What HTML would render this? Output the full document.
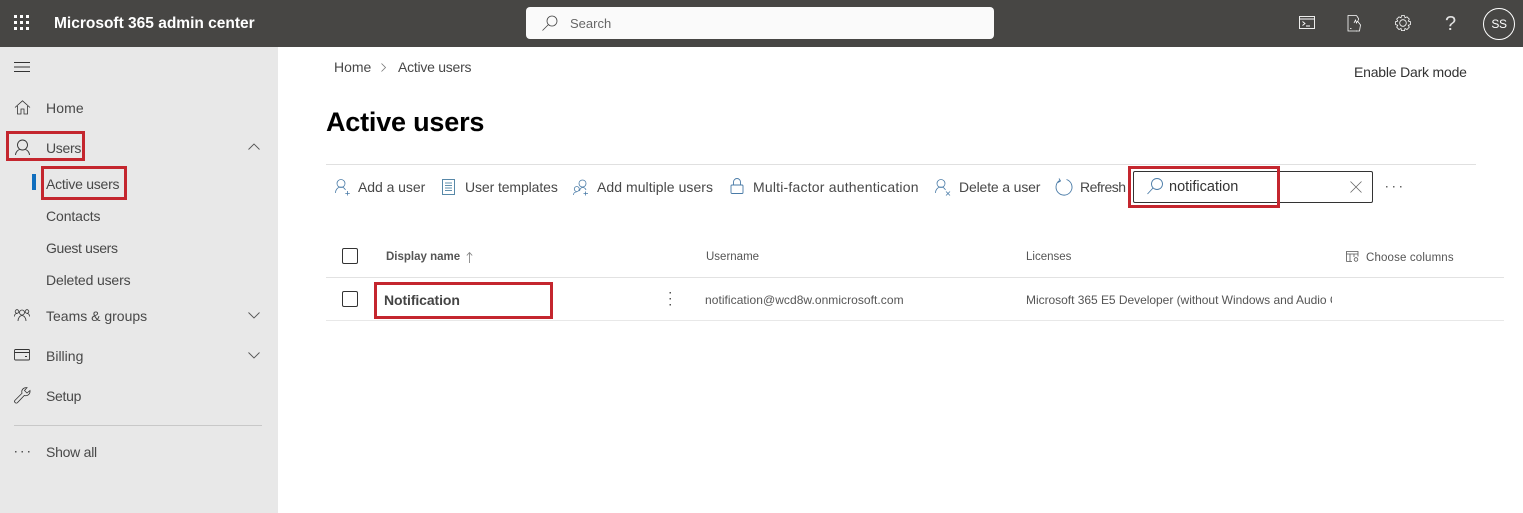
<!DOCTYPE html>
<html lang="en"><head><meta charset="utf-8"><title>Active users - Microsoft 365 admin center</title>
<style>
html,body{margin:0;padding:0;width:1523px;height:513px;overflow:hidden;background:#fff}
body{position:relative;font-family:"Liberation Sans",sans-serif;font-size:14px;color:#484848}
.t{position:absolute;white-space:nowrap;line-height:18px}
.b{position:absolute;box-sizing:border-box}
.r{position:absolute;box-sizing:border-box;border:3px solid #c4262e}
svg{position:absolute;overflow:visible;fill:none}
.s{font-size:14px}
.x{font-size:11.5px;color:#555}
</style></head><body>
<div class="b" style="left:0;top:0;width:1523px;height:47px;background:#474644"></div>
<div class="b" style="left:0;top:47px;width:278px;height:466px;background:#e8e8e8"></div>

<svg style="left:14px;top:15px" width="16" height="16"><g fill="#fff"><rect width="3" height="3" y="0" x="0"/><rect width="3" height="3" y="0" x="6"/><rect width="3" height="3" y="0" x="12"/><rect width="3" height="3" y="6" x="0"/><rect width="3" height="3" y="6" x="6"/><rect width="3" height="3" y="6" x="12"/><rect width="3" height="3" y="12" x="0"/><rect width="3" height="3" y="12" x="6"/><rect width="3" height="3" y="12" x="12"/></g></svg>
<div class="t" style="left:54px;top:15px;font-size:15.5px;font-weight:bold;color:#fff">Microsoft 365 admin center</div>

<div class="b" style="left:526px;top:7px;width:468px;height:32px;background:#fafafa;border-radius:4px"></div>
<svg style="left:542px;top:15px" width="16" height="16" stroke="#444" stroke-width=".8"><circle cx="10" cy="6" r="5"/><path d="M6.500 9.500L.5 15.500"/></svg>
<div class="t" style="left:570px;top:15px;color:#666;font-size:13px">Search</div>

<svg style="left:1299px;top:16px" width="16" height="14" stroke="#fff" stroke-width=".9"><rect x=".5" y=".5" width="15" height="12"/><path d="M.5 3h15M3.500 5.500l2.500 2-2.500 2M7 10h4"/></svg>
<svg style="left:1347px;top:15px" width="16" height="17" stroke="#fff" stroke-width=".8"><path d="M9.500 .5H1v15.500h9M9.500 .5l2 3v2"/><path d="M7 8l1.500-3 1 3 1-2 3 4-1 6h-3.500"/><path d="M3 13.500h1.500"/></svg>
<svg style="left:1395px;top:15px" width="16" height="16" stroke="#fff" stroke-width=".8"><circle cx="8" cy="8" r="3.300"/><path d="M6.500.6h3l.5 2.200 2-1 2.300 2.300-1 2 2.100.5v3l-2.100.6 1 2-2.300 2.300-2-1-.5 2.100h-3l-.5-2.100-2 1-2.300-2.300 1-2-2.100-.6v-3l2.100-.5-1-2L4 1.800l2 1z"/></svg>
<div class="t" style="left:1445px;top:12px;font-size:20px;line-height:24px;color:#e2e2e2">?</div>
<div class="b" style="left:1483px;top:8px;width:32px;height:32px;border:1px solid #fff;border-radius:50%;background:#474644;color:#fff;font-size:12px;letter-spacing:-.4px;line-height:30px;text-align:center">SS</div>

<svg style="left:14px;top:62px" width="16" height="11" stroke="#333" stroke-width=".9"><path d="M0 .5h16M0 5h16M0 9.500h16"/></svg>

<svg style="left:15px;top:100px" width="16" height="15" stroke="#333" stroke-width=".8"><path d="M0 7.500L7.500 .8 15 7.500M2.500 6v8h3.500v-5h3v5h3.500V6"/></svg>
<div class="t" style="left:46px;top:99px;letter-spacing:.1px">Home</div>
<svg style="left:15px;top:139px" width="15" height="17" stroke="#333" stroke-width=".9"><circle cx="7.500" cy="6" r="5"/><path d="M.5 16c0-3 2.500-5 4-5.500M14.500 16c0-3-2.500-5-4-5.500"/></svg>
<div class="t" style="left:46px;top:139px;letter-spacing:-.3px">Users</div>
<svg style="left:248px;top:143px" width="12" height="7" stroke="#555" stroke-width=".9"><path d="M.5 6.500L6 1l5.500 5.500"/></svg>
<div class="b" style="left:32px;top:174px;width:4px;height:16px;background:#106ebe"></div>
<div class="t" style="left:46px;top:175px;letter-spacing:-.25px">Active users</div>
<div class="t" style="left:46px;top:207px;letter-spacing:-.1px">Contacts</div>
<div class="t" style="left:46px;top:239px;letter-spacing:-.35px">Guest users</div>
<div class="t" style="left:46px;top:271px;letter-spacing:-.15px">Deleted users</div>

<svg style="left:14px;top:309px" width="16" height="13" stroke="#333" stroke-width=".8"><circle cx="3" cy="2.500" r="1.800"/><circle cx="13" cy="2.500" r="1.800"/><circle cx="8" cy="3.500" r="2.500"/><path d="M.5 7.500c0-2 1-3 2.500-3M15.500 7.500c0-2-1-3-2.500-3M4 12c0-3 2-5.500 4-5.500s4 2.500 4 5.500"/></svg>
<div class="t" style="left:46px;top:307px">Teams &amp; groups</div>
<svg style="left:248px;top:312px" width="12" height="7" stroke="#555" stroke-width=".9"><path d="M.5.5L6 6l5.500-5.500"/></svg>
<svg style="left:14px;top:349px" width="16" height="12" stroke="#333" stroke-width=".9"><rect x=".5" y=".5" width="15" height="10.500" rx="1"/><path d="M.5 3.500h15M11 7.500h2"/></svg>
<div class="t" style="left:46px;top:347px">Billing</div>
<svg style="left:248px;top:352px" width="12" height="7" stroke="#555" stroke-width=".9"><path d="M.5.5L6 6l5.500-5.500"/></svg>
<svg style="left:14px;top:387px" width="17" height="17" stroke="#333" stroke-width=".8"><path d="M.8 13.500l7.200-7.200C7 3 9.500.2 13 .7l-2.500 2.800 2.500 2.500 3-2.500c.4 3.500-2.500 6-5.700 5L3.300 15.800c-1.500 1-3.500-.8-2.500-2.300z"/></svg>
<div class="t" style="left:46px;top:387px;letter-spacing:-.3px">Setup</div>
<div class="b" style="left:14px;top:425px;width:248px;height:1px;background:#c8c8c8"></div>
<svg style="left:15px;top:451px" width="15" height="3"><g fill="#555"><rect width="1.500" height="1.500"/><rect x="6.500" width="1.500" height="1.500"/><rect x="13" width="1.500" height="1.500"/></g></svg>
<div class="t" style="left:46px;top:443px;letter-spacing:-.25px">Show all</div>

<div class="r" style="left:6px;top:131px;width:79px;height:30px"></div>
<div class="r" style="left:41px;top:166px;width:86px;height:34px"></div>

<div class="t s" style="left:334px;top:58px">Home</div>
<svg style="left:381px;top:63px" width="5" height="9" stroke="#777" stroke-width=".8"><path d="M.5.5l4 4-4 4"/></svg>
<div class="t s" style="left:398px;top:58px;letter-spacing:-.25px">Active users</div>
<div class="t s" style="left:1354px;top:63px;color:#333;letter-spacing:-.2px">Enable Dark mode</div>
<div class="t" style="left:326px;top:104px;font-size:27px;line-height:36px;font-weight:bold;color:#000;letter-spacing:-.2px">Active users</div>

<div class="b" style="left:326px;top:164px;width:1150px;height:1px;background:#e0e0e0"></div>

<svg style="left:335px;top:179px" width="16" height="17" stroke="#4a7ba7" stroke-width=".8"><circle cx="6" cy="4.500" r="4"/><path d="M.5 14c0-3.500 2.500-6 5.500-6 2 0 3.500 1 4.500 3M12.500 12v4.500M10.300 14.500h4.500"/></svg>
<div class="t s" style="left:358px;top:178px;letter-spacing:-.05px">Add a user</div>
<svg style="left:442px;top:179px" width="13" height="16" stroke="#2f6c93" stroke-width=".8"><rect x=".5" y=".5" width="12" height="15"/><path d="M3 4h7M3 6.500h7M3 9h7M3 11.500h7"/></svg>
<div class="t s" style="left:465px;top:178px;letter-spacing:-.1px">User templates</div>
<svg style="left:573px;top:179px" width="16" height="17" stroke="#4a7ba7" stroke-width=".8"><circle cx="9.500" cy="4.500" r="3.500"/><circle cx="3.800" cy="10" r="2.500"/><path d="M.5 16c0-1.500 1-3 3-3M6.500 12c.5-2 1.500-3.500 3-3.500 2 0 3 1 3.500 2.500M12.500 12.500v4M10.500 14.500h4.500"/></svg>
<div class="t s" style="left:597px;top:178px;letter-spacing:.05px">Add multiple users</div>
<svg style="left:730px;top:178px" width="14" height="16" stroke="#4a7ba7" stroke-width=".9"><rect x="1" y="7" width="12" height="8.500" rx="1"/><path d="M3.500 7V4a3.500 3.500 0 0 1 7 0v3"/></svg>
<div class="t s" style="left:753px;top:178px;letter-spacing:.2px">Multi-factor authentication</div>
<svg style="left:935px;top:179px" width="17" height="17" stroke="#4a7ba7" stroke-width=".8"><circle cx="6" cy="4.500" r="4"/><path d="M.5 14c0-3.500 2.500-6 5.500-6 2 0 3.500 1 4.500 3M11 12.500l4 4M15 12.500l-4 4"/></svg>
<div class="t s" style="left:959px;top:178px;letter-spacing:-.15px">Delete a user</div>
<svg style="left:1055px;top:178px" width="18" height="18" stroke="#4a7ba7" stroke-width=".9"><path d="M11.500 1.500A8 8 0 1 1 4.500 2.500M4 .5l1.500 2.500-2.500 1.500"/></svg>
<div class="t s" style="left:1080px;top:178px;letter-spacing:-.5px">Refresh</div>

<div class="b" style="left:1133px;top:171px;width:240px;height:32px;border:1px solid #333;border-radius:2px"></div>
<svg style="left:1147px;top:178px" width="16" height="17" stroke="#4a7ba7" stroke-width=".9"><circle cx="10" cy="6" r="5.500"/><path d="M6 10L.5 16"/></svg>
<div class="t" style="left:1169px;top:178px;color:#333;font-size:14.5px">notification</div>
<svg style="left:1350px;top:181px" width="12" height="12" stroke="#666" stroke-width=".8"><path d="M.5.5l11 11M11.500.5l-11 11"/></svg>
<svg style="left:1386px;top:186px" width="16" height="2"><g fill="#666"><rect width="1.500" height="1.500"/><rect x="7" width="1.500" height="1.500"/><rect x="14" width="1.500" height="1.500"/></g></svg>
<div class="r" style="left:1128px;top:166px;width:152px;height:42px"></div>

<div class="b" style="left:342px;top:248px;width:16px;height:16px;border:1px solid #333;border-radius:2px"></div>
<div class="t x" style="left:386px;top:248px;font-weight:bold">Display name</div>
<svg style="left:466px;top:252px" width="7" height="11" stroke="#888" stroke-width=".9"><path d="M3.500 11V.5M.8 3.500l2.700-3 2.700 3"/></svg>
<div class="t x" style="left:706px;top:248px">Username</div>
<div class="t x" style="left:1026px;top:248px">Licenses</div>
<svg style="left:1346px;top:251px" width="13" height="11" stroke="#555" stroke-width=".8"><path d="M.5 10.500V.5h11.500v5M.5 3h11.500M4 3v7.500M.5 10.500H6M8 3v3"/><circle cx="10" cy="8.500" r="1.800"/></svg>
<div class="t x" style="left:1366px;top:249px;letter-spacing:.15px">Choose columns</div>
<div class="b" style="left:326px;top:277px;width:1178px;height:1px;background:#e2e2e2"></div>

<div class="b" style="left:342px;top:291px;width:16px;height:16px;border:1px solid #333;border-radius:2px"></div>
<div class="t" style="left:384px;top:291px;font-size:14px;font-weight:bold;color:#444;letter-spacing:-.1px">Notification</div>
<svg style="left:669px;top:292px" width="3" height="15"><g fill="#555"><rect x=".5" width="1.500" height="1.500"/><rect x=".5" y="6" width="1.500" height="1.500"/><rect x=".5" y="12" width="1.500" height="1.500"/></g></svg>
<div class="t x" style="left:705px;top:291px;font-size:12px;letter-spacing:.05px">notification@wcd8w.onmicrosoft.com</div>
<div class="t x" style="left:1026px;top:291px;width:306px;overflow:hidden;font-size:12px;letter-spacing:-.03px">Microsoft 365 E5 Developer (without Windows and Audio Conferencing)</div>
<div class="b" style="left:326px;top:320px;width:1178px;height:1px;background:#e8e8e8"></div>
<div class="r" style="left:374px;top:282px;width:179px;height:37px"></div>
</body></html>
